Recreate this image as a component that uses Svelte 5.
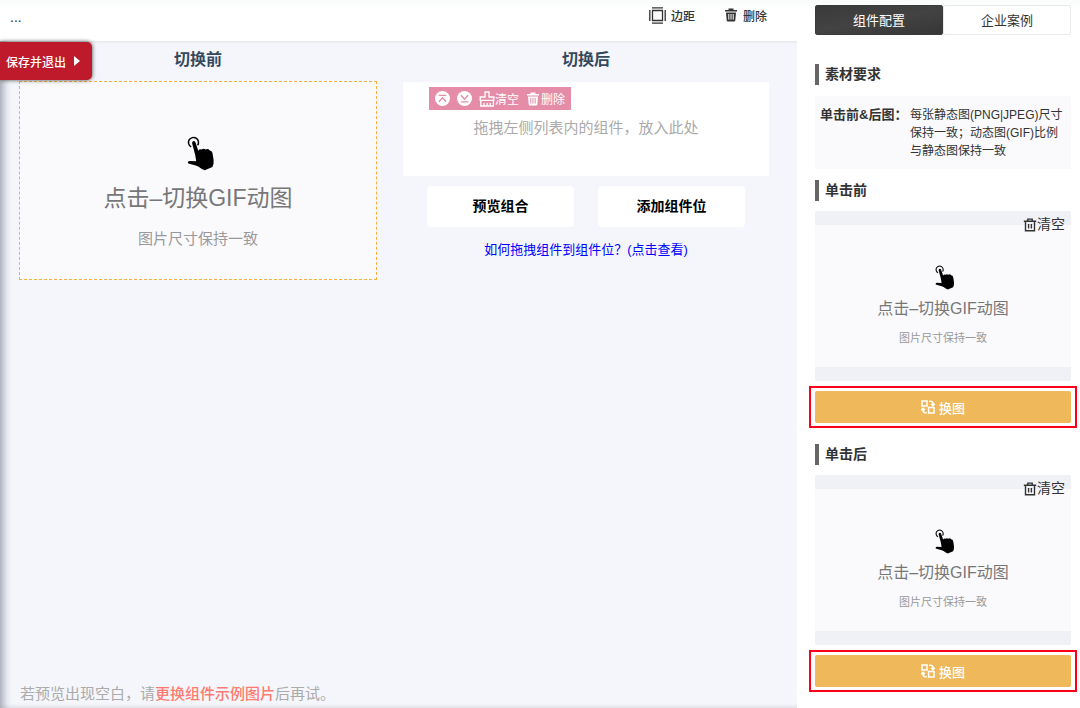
<script>
  const panels = [
    { title: '单击前' },
    { title: '单击后' }
  ];

  let tab = $state('config');
</script>

{#snippet hand()}
  <svg class="hand" viewBox="0 0 28 35" aria-hidden="true">
    <path d="M4.2 10.9A5 5 0 1 1 10.6 9.3" fill="none" stroke="#000" stroke-width="1.5" />
    <path d="M5.1 7.3Q5 5.3 6.6 5.1Q8.2 5 8.6 6.8L11.3 14.8Q12.6 12.8 14.6 13.6Q16.8 12.2 18.6 13.5Q21.3 12.4 22.7 14.4Q25 14.4 25.5 17L26.6 24Q27 28 25.4 31L17.8 34.3Q15 33.4 12 30.9Q9.5 29.6 7 28.9L2 27.8Q.7 27.3.9 26.2Q1.2 25 3 25L9.2 25.2L8.2 19Z" />
  </svg>
{/snippet}

{#snippet trash()}
  <svg class="trash" viewBox="0 0 14 14" aria-hidden="true">
    <path d="M4.5 2V.6h5V2H13v1.6H1V2zM2 4.4h10l-.7 8.2q-.1 1-1.1 1H3.8q-1 0-1.1-1z" fill="currentColor" />
    <path class="slots" d="M4.8 6v5.6M7 6v5.6M9.2 6v5.6" />
  </svg>
{/snippet}

{#snippet preview()}
  {@render hand()}
  <div class="gif-title">点击–切换GIF动图</div>
  <div class="gif-sub">图片尺寸保持一致</div>
{/snippet}

<div class="page">
  <main>
    <header>
      <span class="more">...</span>
      <div class="tools">
        <button class="tool">
          <svg class="margin-icon" viewBox="0 0 17 17" aria-hidden="true">
            <path d="M3.5 3.5h10v10h-10zM3 .8h11M3 16.2h11M.8 3v11M16.2 3v11" fill="none" stroke="currentColor" stroke-width="1.3" />
          </svg>
          边距
        </button>
        <button class="tool">{@render trash()}删除</button>
      </div>
    </header>

    <div class="stage">
      <button class="save">
        保存并退出
        <svg viewBox="0 0 6 10" aria-hidden="true"><path d="M0 0l6 5-6 5z" fill="#fff" /></svg>
      </button>

      <div class="columns">
        <section class="before">
          <h2>切换前</h2>
          <div class="gif-box">{@render preview()}</div>
        </section>

        <section class="after">
          <h2>切换后</h2>
          <div class="slot">
            <div class="slot-bar">
              <button aria-label="上移">
                <svg class="round" viewBox="0 0 15 15">
                  <circle cx="7.5" cy="7.5" r="7.5" fill="#fff" />
                  <path d="M3.8 4.3h7.4M4 10.8l3.5-4 3.5 4" fill="none" stroke="#e58ca9" stroke-width="1.3" />
                </svg>
              </button>
              <button aria-label="下移">
                <svg class="round" viewBox="0 0 15 15">
                  <circle cx="7.5" cy="7.5" r="7.5" fill="#fff" />
                  <path d="M3.8 10.9h7.4M4 4.3l3.5 4 3.5-4" fill="none" stroke="#e58ca9" stroke-width="1.3" />
                </svg>
              </button>
              <button class="clear-slot">
                <svg class="brush" viewBox="0 0 16 16" aria-hidden="true">
                  <path d="M6 6V1h4v5h4.8v3.4H1.2V6zM1.8 9v6h12.6V9M5 15v-3M8.1 15v-3M11.2 15v-3" fill="none" stroke="#fff" stroke-width="1.3" />
                </svg>清空
              </button>
              <button class="del-slot">{@render trash()}删除</button>
            </div>
            <p>拖拽左侧列表内的组件，放入此处</p>
          </div>
          <div class="actions">
            <button>预览组合</button>
            <button>添加组件位</button>
          </div>
          <a class="help" href="#help">如何拖拽组件到组件位？(点击查看)</a>
        </section>
      </div>

      <p class="tip">若预览出现空白，请<b>更换组件示例图片</b>后再试。</p>
    </div>
  </main>

  <aside>
    <div class="tabs">
      <button class:active={tab === 'config'} onclick={() => (tab = 'config')}>组件配置</button>
      <button class:active={tab === 'case'} onclick={() => (tab = 'case')}>企业案例</button>
    </div>

    <h3>素材要求</h3>
    <dl>
      <dt>单击前&amp;后图：</dt>
      <dd>每张静态图(PNG|JPEG)尺寸保持一致；动态图(GIF)比例与静态图保持一致</dd>
    </dl>

    {#each panels as panel}
      <section class="panel">
        <h3>{panel.title}</h3>
        <div class="thumb">
          <button class="clear">
            <svg viewBox="0 0 14 14" aria-hidden="true">
              <path d="M.8 3.3h12.4M4.8 3V1.1h4.4V3M2.5 3.5v9.3h9V3.5M5.6 6v4.4M8.4 6v4.4" fill="none" stroke="currentColor" stroke-width="1.4" />
            </svg>清空
          </button>
          <div class="thumb-img">{@render preview()}</div>
        </div>
        <div class="frame">
          <button class="swap">
            <svg viewBox="0 0 14 14" aria-hidden="true">
              <path d="M1 1h5v5H1zM7.6 7.6h5.4V13H7.6zM8.2 1.2h1.6q2.2.4 2.2 2.6v1.4M10.2 3.9l1.8 1.7 1.8-1.7M5.8 12.8H4.2Q2 12.4 2 10.2V8.8M.2 10.1L2 8.4l1.8 1.7" fill="none" stroke="#fff" stroke-width="1.5" />
            </svg>
            换图
          </button>
        </div>
      </section>
    {/each}
  </aside>
</div>

<style>
  :global(body) {
    margin: 0;
    font-family: "Liberation Sans", "Noto Sans CJK SC", sans-serif;
    color: #333;
    background: #fff;
  }

  h2, h3, p, dl, dd {
    margin: 0;
  }

  button {
    display: flex;
    align-items: center;
    justify-content: center;
    padding: 0;
    border: 0;
    background: none;
    color: inherit;
    font: inherit;
    white-space: nowrap;
    cursor: pointer;
  }

  svg {
    display: block;
    flex-shrink: 0;
  }

  .page {
    display: flex;
    min-height: 100vh;
    background: linear-gradient(#f9fcfb, #fff 10px);
  }

  main {
    flex: 1;
    display: flex;
    flex-direction: column;
  }

  header {
    display: flex;
    justify-content: space-between;
    height: 41px;
    padding: 0 30px 0 10px;
    box-sizing: border-box;
  }

  .more {
    font-size: 14px;
    line-height: 34px;
  }

  .tools {
    display: flex;
    gap: 29px;
    height: 30px;
  }

  .tool {
    gap: 5px;
    font-size: 12px;
    font-weight: 500;
  }

  .margin-icon {
    width: 17px;
    height: 17px;
  }

  .trash {
    width: 14px;
    height: 14px;
  }

  .slots {
    stroke: #fff;
    stroke-width: 1;
  }

  .stage {
    flex: 1;
    display: flex;
    flex-direction: column;
    background: #f5f6fb;
    box-shadow: inset 9px 0 8px -6px #9a9dac, inset 0 -4px 4px -3px #dfe0e6, inset 0 3px 3px -2px #ebecf1;
  }

  .save {
    position: absolute;
    top: 42px;
    left: 0;
    gap: 8px;
    padding: 0 12px 0 6px;
    height: 38px;
    border-radius: 0 5px 5px 0;
    background: #be1a2b;
    box-shadow: 0 0 4px #444;
    color: #fff;
    font-size: 12px;
    font-weight: 500;
  }

  .save svg {
    width: 6px;
    height: 10px;
  }

  .columns {
    flex: 1;
    display: flex;
    align-items: flex-start;
    gap: 26px;
    padding: 0 28px 0 19px;
  }

  .before {
    flex: 358;
  }

  .after {
    flex: 366;
  }

  h2 {
    height: 40px;
    color: #34495e;
    font-size: 16px;
    font-weight: 700;
    line-height: 37px;
    text-align: center;
  }

  .gif-box {
    display: flex;
    flex-direction: column;
    align-items: center;
    height: 199px;
    padding-top: 54px;
    box-sizing: border-box;
    border: 1px dashed #f5b03e;
    background: #fafafd;
  }

  .hand {
    width: 28px;
    height: 35px;
    margin-left: 6px;
  }

  .gif-title {
    margin-top: 9px;
    color: #777;
    font-size: 23px;
    line-height: 36px;
  }

  .gif-sub {
    margin-top: 11px;
    color: #999;
    font-size: 15px;
    line-height: 24px;
  }

  .slot {
    height: 94px;
    margin-top: 1px;
    padding: 5px 26px 0;
    box-sizing: border-box;
    background: #fff;
  }

  .slot-bar {
    display: flex;
    align-items: center;
    width: max-content;
    height: 23px;
    padding: 0 6px;
    background: #e58ca9;
    color: #fff;
    font-size: 12px;
    gap: 7px;
  }

  .slot-bar .slots {
    stroke: #e58ca9;
  }

  .round {
    width: 15px;
    height: 15px;
  }

  .brush {
    width: 16px;
    height: 16px;
  }

  .del-slot {
    gap: 1px;
  }

  .slot p {
    color: #aaa;
    font-size: 15px;
    line-height: 36px;
    text-align: center;
  }

  .actions {
    display: flex;
    gap: 24px;
    margin: 10px 24px 0;
  }

  .actions button {
    flex: 1;
    height: 41px;
    padding-bottom: 3px;
    border-radius: 4px;
    background: #fff;
    color: #000;
    font-size: 14px;
    font-weight: 700;
  }

  .help {
    display: block;
    margin-top: 12px;
    color: #00f;
    font-size: 13px;
    line-height: 22px;
    text-align: center;
    text-decoration: none;
  }

  .tip {
    padding: 0 20px;
    color: #aaa;
    font-size: 15px;
    line-height: 28px;
  }

  .tip b {
    color: #ff7a70;
    font-weight: 500;
  }

  aside {
    width: 256px;
    padding: 5px 9px 0 18px;
  }

  .tabs {
    display: flex;
    height: 30px;
    margin-bottom: 29px;
  }

  .tabs button {
    flex: 1;
    padding-bottom: 2px;
    border: 1px solid #e8eaea;
    border-radius: 2px;
    font-size: 13px;
  }

  .tabs .active {
    border-color: #3a3a3a;
    background: linear-gradient(170deg, #3a3a3a, #434343 50%, #363636);
    color: #fff;
  }

  h3 {
    padding-left: 6px;
    border-left: 4px solid #666;
    font-size: 14px;
    font-weight: 700;
    line-height: 21px;
  }

  dl {
    display: flex;
    justify-content: space-between;
    height: 73px;
    margin: 11px 0;
    padding: 10px 3px 0 5px;
    box-sizing: border-box;
    background: #fafafd;
    line-height: 18px;
  }

  dt {
    font-size: 13px;
    font-weight: 700;
    white-space: nowrap;
  }

  dd {
    width: 158px;
    flex-shrink: 0;
    font-size: 12px;
  }

  .panel {
    margin-bottom: 16px;
  }

  .thumb {
    position: relative;
    margin: 10px 0 5px;
    padding: 14px 0;
    border-radius: 2px;
    background: #f0f1f7;
  }

  .thumb-img {
    display: flex;
    flex-direction: column;
    align-items: center;
    height: 142px;
    padding-top: 40px;
    box-sizing: border-box;
    background: #fafafd;
  }

  .thumb .hand {
    width: 20px;
    height: 25px;
    margin-left: 4px;
  }

  .thumb .gif-title {
    margin-top: 6px;
    font-size: 16px;
    line-height: 26px;
  }

  .thumb .gif-sub {
    margin-top: 7px;
    font-size: 11px;
    line-height: 18px;
  }

  .clear {
    position: absolute;
    top: 3px;
    right: 6px;
    font-size: 14px;
    line-height: 21px;
  }

  .clear svg {
    width: 14px;
    height: 14px;
  }

  .frame {
    margin: 0 -6px;
    padding: 3px 4px;
    border: 2px solid #fa0019;
  }

  .swap {
    gap: 4px;
    width: 100%;
    height: 32px;
    border-radius: 2px;
    background: #efb85a;
    color: #fff;
    font-size: 13px;
    font-weight: 500;
  }

  .swap svg {
    width: 14px;
    height: 14px;
  }
</style>
